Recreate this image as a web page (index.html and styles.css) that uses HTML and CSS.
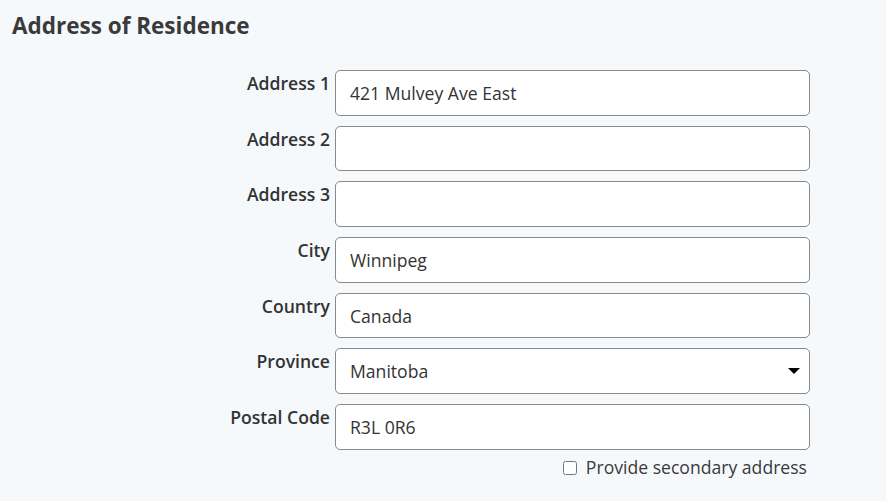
FILE: index.html
```html
<!DOCTYPE html>
<html lang="en">
<head>
    <meta charset="UTF-8">
    <meta name="viewport" content="width=device-width, initial-scale=1.0">
    <title>Address of Residence</title>
    <link rel="stylesheet" href="styles.css">
</head>
<body>
    <h2 class="section-title">Address of Residence</h2>

    <div class="address-form">
        <label class="field-label" for="addr1">Address 1</label>
        <input class="field-input" type="text" id="addr1" value="421 Mulvey Ave East">

        <label class="field-label" for="addr2">Address 2</label>
        <input class="field-input" type="text" id="addr2" value="">

        <label class="field-label" for="addr3">Address 3</label>
        <input class="field-input" type="text" id="addr3" value="">

        <label class="field-label" for="city">City</label>
        <input class="field-input" type="text" id="city" value="Winnipeg">

        <label class="field-label" for="country">Country</label>
        <input class="field-input" type="text" id="country" value="Canada">

        <label class="field-label" for="province">Province</label>
        <div class="select-wrap">
            <select class="field-input" id="province">
                <option>Manitoba</option>
            </select>
        </div>

        <label class="field-label" for="postal">Postal Code</label>
        <input class="field-input" type="text" id="postal" value="R3L 0R6">

        <div class="check-row">
            <label><input type="checkbox" id="secondary"> Provide secondary address</label>
        </div>
    </div>
</body>
</html>
```

FILE: styles.css
```css
body {
    margin: 0;
    padding: 0;
    background: #f5f9fc;
    color: #333;
    font-family: 'Open Sans', 'Noto Sans', sans-serif;
}
.section-title {
    margin: 0;
    padding: 11px 0 0 12px;
    font-size: 22.5px;
    font-weight: 700;
    line-height: 30px;
    color: #3a3a3a;
}
.address-form {
    display: grid;
    grid-template-columns: 330px 475px;
    column-gap: 5px;
    row-gap: 10px;
    margin-top: 29px;
}
.field-label {
    text-align: right;
    font-size: 17.6px;
    font-weight: 600;
    line-height: 24px;
    padding-top: 1px;
    color: #333;
}
.field-input {
    box-sizing: border-box;
    width: 100%;
    height: 45.7px;
    margin: 0;
    padding: 0 14px;
    border: 1px solid #8a8a8a;
    border-radius: 5px;
    background: #fff;
    color: #333;
    font-family: 'Open Sans', 'Noto Sans', sans-serif;
    font-size: 17.6px;
}
.select-wrap { position: relative; }
.select-wrap select {
    appearance: none;
    -webkit-appearance: none;
}
.select-wrap::after {
    content: '';
    position: absolute;
    right: 10px;
    top: 20px;
    border-left: 6px solid transparent;
    border-right: 6px solid transparent;
    border-top: 6px solid #000;
    pointer-events: none;
}
.check-row {
    grid-column: 2;
    text-align: right;
    padding-right: 3px;
    margin-top: -5px;
    font-size: 17.6px;
    line-height: 24px;
    color: #3a3a3a;
}
.check-row input {
    width: 14px;
    height: 14px;
    margin: 0 4px 0 0;
    vertical-align: -1px;
}
```
